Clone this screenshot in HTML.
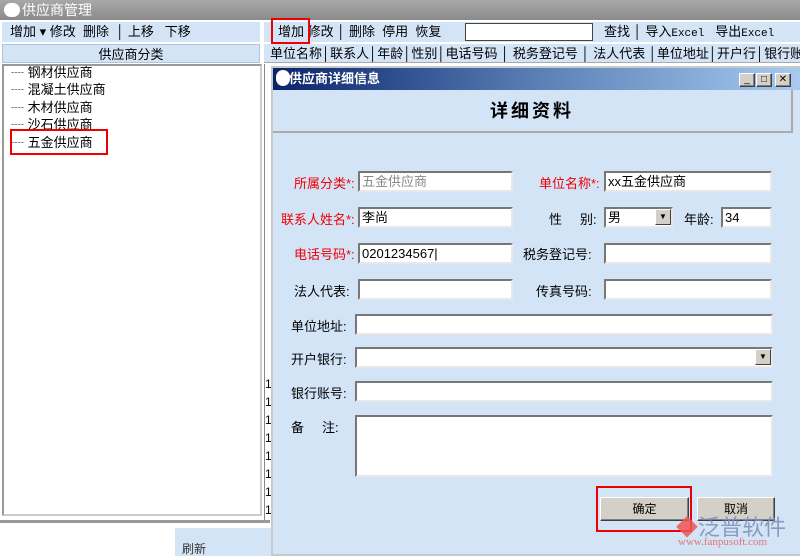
<!DOCTYPE html>
<html><head><meta charset="utf-8"><style>
*{box-sizing:border-box;margin:0;padding:0}
body{width:800px;height:556px;overflow:hidden;background:#fff;font-family:"Liberation Sans","Noto Sans CJK SC",sans-serif;font-size:13px;color:#000;position:relative}
.a{position:absolute}
.tb{background:#d4e4f7}
.in{position:absolute;background:#fff;border:2px solid;border-color:#777 #e8e8e8 #e8e8e8 #777;font-size:13px;padding-left:2px;line-height:17px;white-space:nowrap}
.lb{position:absolute;font-size:13px;white-space:nowrap}
.r{color:#e00}
.btn{position:absolute;background:#d4d0c8;border:1px solid;border-color:#fff #404040 #404040 #fff;box-shadow:inset -1px -1px #808080;text-align:center;font-size:12px}
.dd{position:absolute;width:16px;height:16px;background:#d4d0c8;border:1px solid;border-color:#fff #404040 #404040 #fff;font-size:8px;text-align:center;line-height:14px}
</style></head><body>
<div class="a" style="left:0;top:0;width:800px;height:20px;background:linear-gradient(#a8a8a8,#8a8a8a);color:#fff;font-size:14px;line-height:20px;padding-left:22px">供应商管理</div>
<div class="a" style="left:4px;top:3px;width:16px;height:14px;background:#fff;border-radius:7px"></div>
<div class="a tb" style="left:2px;top:22px;width:258px;height:20px;font-size:13px;line-height:20px;padding-left:8px;white-space:nowrap">增加 ▾ 修改&nbsp; 删除 &nbsp;│ 上移&nbsp;&nbsp; 下移</div>
<div class="a" style="left:2px;top:44px;width:258px;height:19px;background:#d4e4f7;text-align:center;line-height:19px;font-size:13px;border:1px solid #b0c4de">供应商分类</div>
<div class="a" style="left:2px;top:64px;width:260px;height:452px;border:2px solid;border-color:#999 #ccc #ccc #999;background:#fff"></div>
<div class="a" style="left:11px;top:64px;line-height:17.4px;font-size:13px;color:#000">
<div>┈ 钢材供应商</div><div>┈ 混凝土供应商</div><div>┈ 木材供应商</div><div>┈ 沙石供应商</div><div>┈ 五金供应商</div></div>
<div class="a" style="left:10px;top:129px;width:98px;height:26px;border:2px solid #e00"></div>
<div class="a" style="left:0;top:520px;width:270px;height:3px;background:#999"></div>
<div class="a tb" style="left:175px;top:528px;width:100px;height:28px"></div>
<div class="a" style="left:182px;top:540px;font-size:12px;color:#333">刷新</div>
<div class="a tb" style="left:264px;top:22px;width:536px;height:20px;line-height:20px;font-size:13px;white-space:nowrap;padding-left:14px">增加&nbsp;修改 │ 删除&nbsp; 停用&nbsp; 恢复</div>
<div class="a" style="left:465px;top:23px;width:128px;height:18px;background:#fff;border:1px solid #444"></div>
<div class="a" style="left:604px;top:22px;line-height:20px;font-size:13px;white-space:nowrap">查找 │ 导入<span style="font-family:'Liberation Mono';font-size:11px">Excel</span>&nbsp;&nbsp; 导出<span style="font-family:'Liberation Mono';font-size:11px">Excel</span></div>
<div class="a" style="left:271px;top:18px;width:39px;height:26px;border:2px solid #e00"></div>
<div class="a tb" style="left:264px;top:44px;width:536px;height:19px;line-height:19px;font-size:13px;white-space:nowrap;padding-left:6px;border-bottom:1px solid #aaa">单位名称│联系人│年龄│性别│电话号码 │ 税务登记号 │ 法人代表 │单位地址│开户行│银行账</div>
<div class="a" style="left:264px;top:64px;width:8px;height:456px;background:#fff;border-left:1px solid #888"></div>
<div class="a" style="left:265px;top:375px;font-size:12px;line-height:18px">1<br>1<br>1<br>1<br>1<br>1<br>1<br>1</div>
<div class="a" style="left:271px;top:66px;width:529px;height:490px;background:#d4e4f7;border:2px solid #c8c8c8;border-right:none"></div>
<div class="a" style="left:273px;top:68px;width:527px;height:22px;background:linear-gradient(90deg,#0a246a,#5a7fb5 50%,#a6caf0);color:#fff;font-size:13px;font-weight:bold;line-height:22px;padding-left:16px">供应商详细信息</div>
<div class="a" style="left:276px;top:70px;width:14px;height:16px;background:#fff;border-radius:7px"></div>
<div class="btn" style="left:739px;top:73px;width:16px;height:14px;font-size:10px;line-height:12px">_</div>
<div class="btn" style="left:756px;top:73px;width:16px;height:14px;font-size:10px;line-height:12px">□</div>
<div class="btn" style="left:775px;top:73px;width:16px;height:14px;font-size:10px;line-height:12px">✕</div>
<div class="a" style="left:273px;top:90px;width:520px;height:43px;border-bottom:2px solid #aaa;border-right:2px solid #aaa;text-align:center;font-size:18px;font-weight:bold;line-height:42px;letter-spacing:3px">详细资料</div>
<div class="lb r" style="left:294px;top:173px">所属分类*:</div><div class="in" style="left:358px;top:171px;width:155px;height:21px;color:#888">五金供应商</div>
<div class="lb r" style="left:539px;top:173px">单位名称*:</div><div class="in" style="left:604px;top:171px;width:168px;height:21px">xx五金供应商</div>
<div class="lb r" style="left:281px;top:209px">联系人姓名*:</div><div class="in" style="left:358px;top:207px;width:155px;height:21px">李尚</div>
<div class="lb" style="left:549px;top:209px">性&nbsp;&nbsp;&nbsp;&nbsp; 别:</div><div class="in" style="left:604px;top:207px;width:69px;height:21px">男</div><div class="dd" style="left:655px;top:209px">▼</div>
<div class="lb" style="left:684px;top:209px">年龄:</div><div class="in" style="left:721px;top:207px;width:51px;height:21px">34</div>
<div class="lb r" style="left:294px;top:244px">电话号码*:</div><div class="in" style="left:358px;top:243px;width:155px;height:21px">0201234567|</div>
<div class="lb" style="left:523px;top:244px">税务登记号:</div><div class="in" style="left:604px;top:243px;width:168px;height:21px"></div>
<div class="lb" style="left:294px;top:281px">法人代表:</div><div class="in" style="left:358px;top:279px;width:155px;height:21px"></div>
<div class="lb" style="left:536px;top:281px">传真号码:</div><div class="in" style="left:604px;top:279px;width:168px;height:21px"></div>
<div class="lb" style="left:291px;top:316px">单位地址:</div><div class="in" style="left:355px;top:314px;width:418px;height:21px"></div>
<div class="lb" style="left:291px;top:349px">开户银行:</div><div class="in" style="left:355px;top:347px;width:418px;height:21px"></div><div class="dd" style="left:755px;top:349px">▼</div>
<div class="lb" style="left:291px;top:383px">银行账号:</div><div class="in" style="left:355px;top:381px;width:418px;height:21px"></div>
<div class="lb" style="left:291px;top:417px">备&nbsp;&nbsp;&nbsp;&nbsp; 注:</div><div class="in" style="left:355px;top:415px;width:418px;height:62px"></div>
<div class="btn" style="left:600px;top:497px;width:89px;height:24px;line-height:22px">确定</div>
<div class="btn" style="left:697px;top:497px;width:78px;height:24px;line-height:22px">取消</div>
<div class="a" style="left:596px;top:486px;width:96px;height:46px;border:2px solid #e00"></div>
<div class="a" style="left:676px;top:510px;font-size:22px;color:#7a8fb8;opacity:.85;white-space:nowrap"><span style="color:#e55">◆</span>泛普软件</div>
<div class="a" style="left:678px;top:536px;font-size:11px;color:#d77;font-family:'Liberation Serif'">www.fanpusoft.com</div>
</body></html>
